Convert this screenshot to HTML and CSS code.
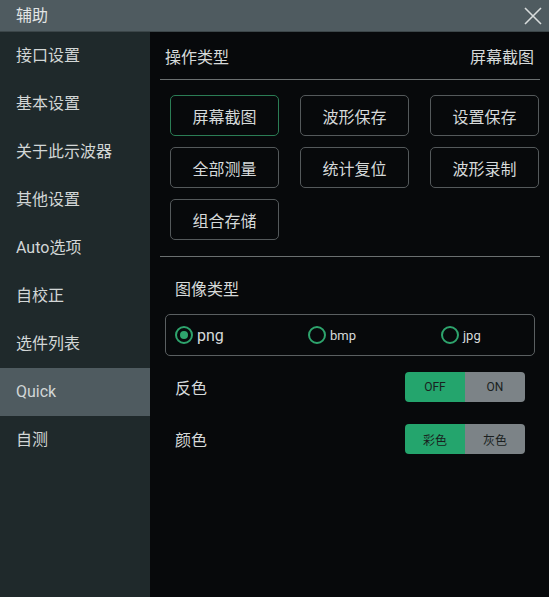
FILE: index.html
```html
<!DOCTYPE html>
<html lang="zh">
<head>
<meta charset="utf-8">
<link rel="stylesheet" href="styles.css">
</head>
<body>
<div class="window">
  <div class="titlebar">
    <span class="title">辅助</span>
    <svg class="close" width="18" height="18" viewBox="0 0 18 18"><path d="M1 1 L17 17 M17 1 L1 17" stroke="#d8dcdc" stroke-width="1.6" fill="none"/></svg>
  </div>
  <div class="body">
    <nav class="sidebar">
      <div class="item">接口设置</div>
      <div class="item">基本设置</div>
      <div class="item">关于此示波器</div>
      <div class="item">其他设置</div>
      <div class="item">Auto选项</div>
      <div class="item">自校正</div>
      <div class="item">选件列表</div>
      <div class="item active">Quick</div>
      <div class="item">自测</div>
    </nav>
    <main class="main">
      <div class="header">
        <span>操作类型</span>
        <span>屏幕截图</span>
      </div>
      <div class="grid">
        <button class="btn selected">屏幕截图</button>
        <button class="btn">波形保存</button>
        <button class="btn">设置保存</button>
        <button class="btn">全部测量</button>
        <button class="btn">统计复位</button>
        <button class="btn">波形录制</button>
        <button class="btn">组合存储</button>
      </div>
      <div class="divider"></div>
      <div class="label">图像类型</div>
      <div class="radios">
        <div class="radio big checked"><span class="dot"></span>png</div>
        <div class="radio"><span class="dot"></span>bmp</div>
        <div class="radio"><span class="dot"></span>jpg</div>
      </div>
      <div class="row">
        <span class="rlabel">反色</span>
        <div class="toggle"><span class="on">OFF</span><span class="off">ON</span></div>
      </div>
      <div class="row">
        <span class="rlabel">颜色</span>
        <div class="toggle cn"><span class="on">彩色</span><span class="off">灰色</span></div>
      </div>
    </main>
  </div>
</div>
</body>
</html>
```
FILE: styles.css
```css
* { box-sizing: border-box; }
html, body { margin: 0; padding: 0; }
body {
  width: 549px;
  height: 597px;
  overflow: hidden;
  background: #07090b;
  font-family: "Roboto", "Noto Sans CJK SC", sans-serif;
  color: #d6dada;
}
.window { display: flex; flex-direction: column; height: 597px; }
.titlebar {
  height: 32px;
  background: #4f5b60;
  border-bottom: 1px solid #3c4649;
  display: flex;
  align-items: center;
  justify-content: space-between;
  padding: 0 7px 0 16px;
  flex: none;
}
.title { font-size: 16px; color: #e2e5e5; line-height: 20px; }
.close { display: block; }
.body { display: flex; flex: 1; min-height: 0; }
.sidebar {
  width: 150px;
  background: #1f292b;
  flex: none;
}
.item {
  height: 48px;
  line-height: 48px;
  padding-left: 16px;
  font-size: 16px;
  color: #d2d6d6;
}
.item.active { background: #4f5b60; }
.main {
  flex: 1;
  padding: 0 9px 0 10px;
}
.header {
  display: flex;
  justify-content: space-between;
  padding: 16px 6px 11px 5px;
  line-height: 20px;
  font-size: 16px;
  color: #d6dada;
  border-bottom: 1px solid #6a6f70;
}
.grid {
  display: grid;
  grid-template-columns: repeat(3, 109px);
  grid-auto-rows: 41px;
  column-gap: 21px;
  row-gap: 11px;
  padding-left: 10px;
  margin-top: 15px;
}
.btn {
  background: #07090b;
  border: 1px solid #54595b;
  border-radius: 5px;
  color: #d6dada;
  font-family: "Noto Sans CJK SC", sans-serif;
  font-size: 16px;
  padding: 0;
}
.btn.selected { border-color: #2b7d55; }
.divider {
  height: 1px;
  background: #6a6f70;
  margin-top: 16px;
}
.label {
  margin-top: 23px;
  padding-left: 15px;
  line-height: 20px;
  font-size: 16px;
  color: #d6dada;
}
.radios {
  margin: 14px 5px 0 5px;
  height: 42px;
  border: 1px solid #5a5f61;
  border-radius: 5px;
  display: grid;
  grid-template-columns: 133px 133px 1fr;
  align-items: center;
  padding-left: 9px;
}
.radio {
  display: flex;
  align-items: center;
  font-size: 13px;
  color: #d6dada;
}
.radio.big { font-size: 16px; }
.dot {
  width: 18px;
  height: 18px;
  border: 2px solid #2ea46d;
  border-radius: 50%;
  margin-right: 4px;
  position: relative;
  flex: none;
}
.radio.checked .dot::after {
  content: "";
  position: absolute;
  left: 3px; top: 3px;
  width: 8px; height: 8px;
  border-radius: 50%;
  background: #2ea46d;
}
.row {
  display: flex;
  justify-content: space-between;
  align-items: center;
  height: 30px;
  margin-top: 16px;
  padding: 0 15px;
}
.row + .row { margin-top: 22px; }
.rlabel { font-size: 16px; color: #d6dada; font-family: "Noto Sans CJK SC", sans-serif; }
.toggle {
  display: flex;
  width: 120px;
  height: 30px;
  border-radius: 4px;
  overflow: hidden;
  font-size: 12px;
  color: #1a1f20;
}
.toggle span {
  flex: 1;
  display: flex;
  align-items: center;
  justify-content: center;
}
.toggle .on { background: #24a56d; }
.toggle .off { background: #7c8387; }
.toggle.cn { font-family: "Noto Sans CJK SC", sans-serif; }
```
